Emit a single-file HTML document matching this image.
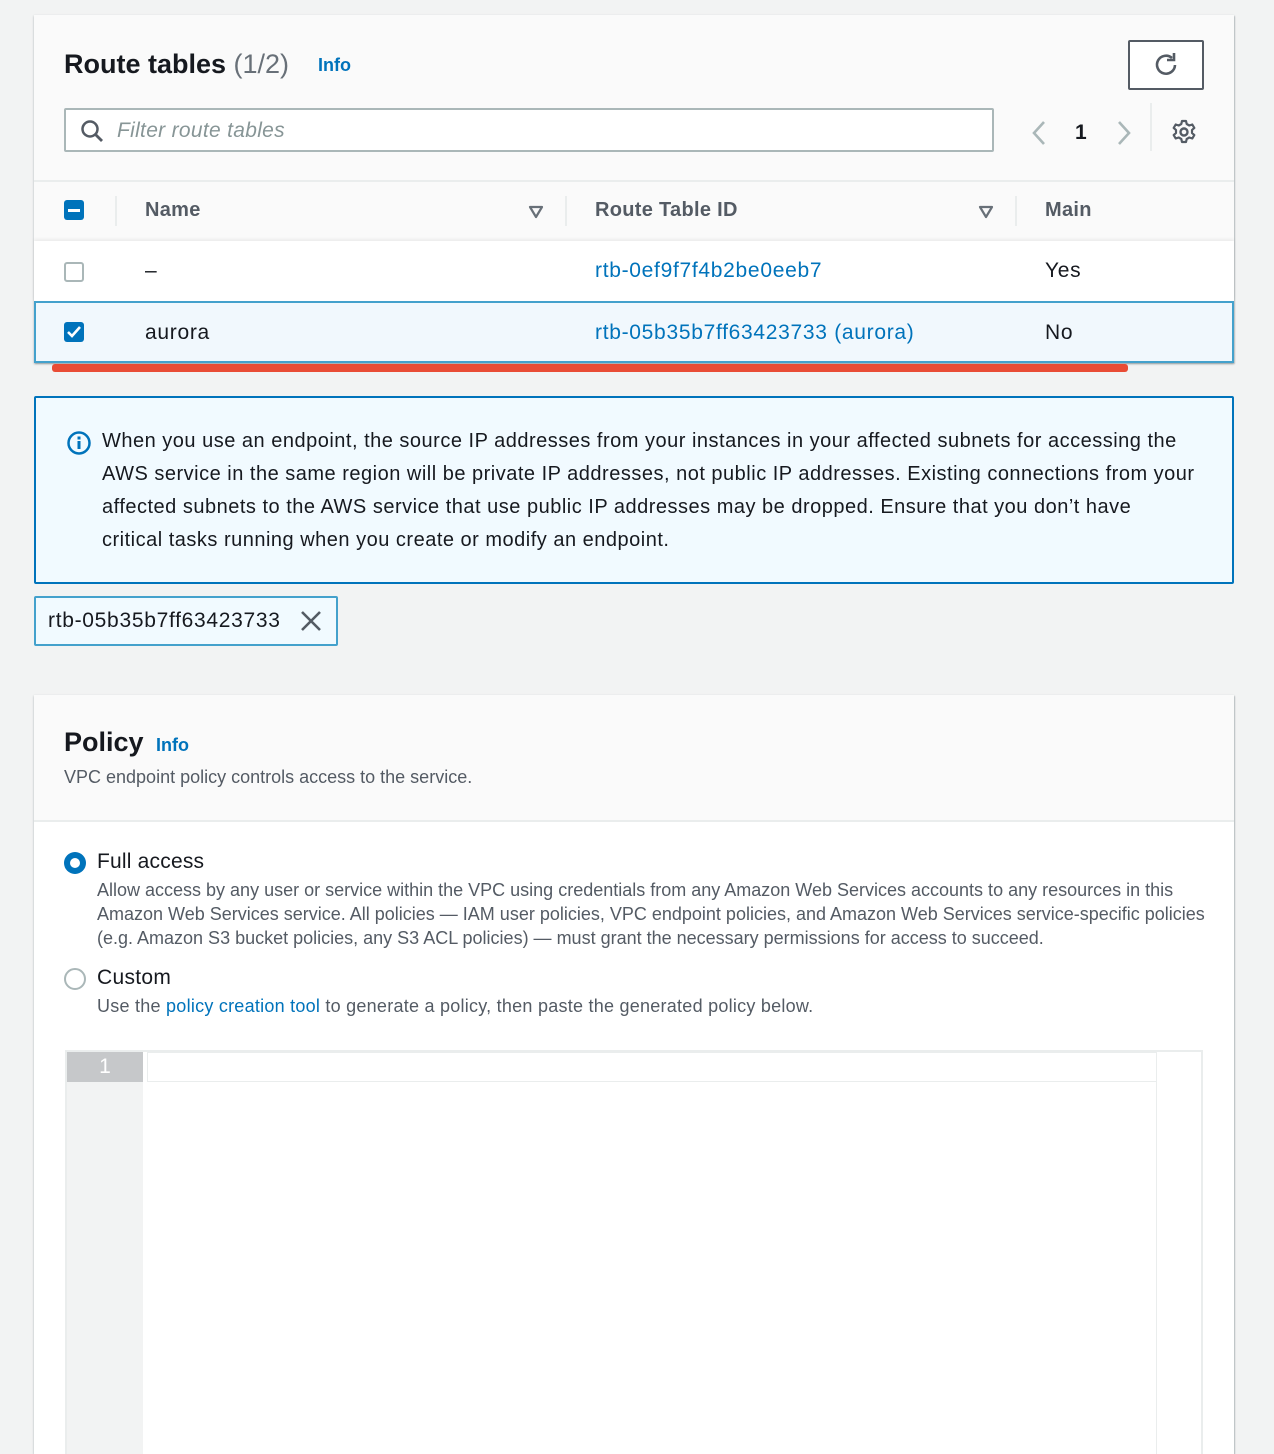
<!DOCTYPE html>
<html style="overflow:hidden;height:1454px"><head><meta charset="utf-8"><style>
body{margin:0;width:1274px;height:1454px;background:#f2f3f3;font-family:"Liberation Sans",sans-serif;color:#16191f;position:relative;overflow:hidden}
.abs{position:absolute}
.panel{position:absolute;left:34px;width:1200px;background:#fff;box-shadow:0 1px 2px rgba(0,28,36,.3),1px 1px 1px rgba(0,28,36,.15)}
.link{color:#0073bb}
.cb{position:absolute;width:20px;height:20px;border-radius:3px;box-sizing:border-box}
.th{position:absolute;top:199px;font-weight:bold;font-size:20px;color:#545b64;letter-spacing:.3px}
.sep{position:absolute;top:196px;width:2px;height:30px;background:#eaeded}
.td{position:absolute;font-size:21px;letter-spacing:.7px}
</style></head><body>

<div class="panel" style="top:15px;height:348px;background:#fafafa">
 <div class="abs" style="left:30px;top:34px;font-size:27px;font-weight:bold">Route tables <span style="font-weight:normal;color:#687078">(1/2)</span></div>
 <div class="abs link" style="left:284px;top:40px;font-size:18px;font-weight:bold">Info</div>
 <div class="abs" style="left:1094px;top:25px;width:72px;height:46px;border:2px solid #545b64;border-radius:2px;background:#fff">
  <svg width="72" height="46" viewBox="0 0 72 46"><path d="M45 23a9 9 0 1 1-3-7" fill="none" stroke="#545b64" stroke-width="2.6"/><path d="M44 11v7h-7" fill="none" stroke="#545b64" stroke-width="2.6"/></svg>
 </div>
 <div class="abs" style="left:30px;top:93px;width:926px;height:40px;border:2px solid #aab7b8;border-radius:2px;background:#fff">
  <svg class="abs" style="left:14px;top:9px" width="24" height="24"><circle cx="10" cy="10" r="7.5" fill="none" stroke="#545b64" stroke-width="2.5"/><path d="M15.5 15.5L22 22" stroke="#545b64" stroke-width="2.8"/></svg>
  <div class="abs" style="left:51px;top:9px;font-size:21px;font-style:italic;color:#879596;letter-spacing:.3px">Filter route tables</div>
 </div>
 <svg class="abs" style="left:996px;top:104px" width="20" height="28"><path d="M14 3L4 14l10 11" fill="none" stroke="#aab7b8" stroke-width="2.6"/></svg>
 <div class="abs" style="left:1041px;top:106px;font-size:21px;font-weight:bold">1</div>
 <svg class="abs" style="left:1080px;top:104px" width="20" height="28"><path d="M5 3l10 11L5 25" fill="none" stroke="#aab7b8" stroke-width="2.6"/></svg>
 <div class="abs" style="left:1116px;top:88px;width:2px;height:48px;background:#eaeded"></div>
 <svg class="abs" style="left:1137px;top:104px" width="26" height="26" viewBox="0 0 26 26"><circle cx="13" cy="13" r="3.5" fill="none" stroke="#545b64" stroke-width="2.4"/><path d="M11 2h4l.7 3 2.6 1.5 3-1 2 3.4-2.3 2.1v3l2.3 2.1-2 3.4-3-1-2.6 1.5-.7 3h-4l-.7-3-2.6-1.5-3 1-2-3.4 2.3-2.1v-3L2.7 8.9l2-3.4 3 1L10.3 5z" fill="none" stroke="#545b64" stroke-width="2.2" stroke-linejoin="round"/></svg>
 <div class="abs" style="left:0;top:165px;width:1200px;height:2px;background:#eaeded"></div>
</div>
<div class="cb" style="left:64px;top:200px;background:#0073bb;border:none"><div class="abs" style="left:4px;top:9px;width:12px;height:3px;background:#fff"></div></div>
<div class="sep" style="left:115px"></div>
<div class="th" style="left:145px">Name</div>
<svg class="abs" style="left:528px;top:205px" width="16" height="14"><path d="M2 2h12L8 12z" fill="none" stroke="#687078" stroke-width="2.2" stroke-linejoin="round"/></svg>
<div class="sep" style="left:565px"></div>
<div class="th" style="left:595px">Route Table ID</div>
<svg class="abs" style="left:978px;top:205px" width="16" height="14"><path d="M2 2h12L8 12z" fill="none" stroke="#687078" stroke-width="2.2" stroke-linejoin="round"/></svg>
<div class="sep" style="left:1015px"></div>
<div class="th" style="left:1045px">Main</div>
<div class="abs" style="left:34px;top:241px;width:1200px;height:60px;background:#fff;box-shadow:0 -2px 3px rgba(0,0,0,.06)"></div>
<div class="cb" style="left:64px;top:262px;border:2px solid #aab7b8;background:#fff"></div>
<div class="td" style="left:145px;top:259px">–</div>
<div class="td link" style="left:595px;top:259px">rtb-0ef9f7f4b2be0eeb7</div>
<div class="td" style="left:1045px;top:259px">Yes</div>
<div class="abs" style="left:34px;top:301px;width:1196px;height:58px;background:#f1f8fd;border:2px solid #44a1cc"></div>
<div class="cb" style="left:64px;top:322px;background:#0073bb"><svg width="20" height="20"><path d="M4 10l4 4 8-9" fill="none" stroke="#fff" stroke-width="2.6"/></svg></div>
<div class="td" style="left:145px;top:321px">aurora</div>
<div class="td link" style="left:595px;top:321px">rtb-05b35b7ff63423733 (aurora)</div>
<div class="td" style="left:1045px;top:321px">No</div>
<div class="abs" style="left:52px;top:364px;width:1076px;height:8px;background:#e8422a;border-radius:3px;opacity:.95"></div>

<div class="abs" style="left:34px;top:396px;width:1196px;height:184px;background:#f1faff;border:2px solid #0073bb;border-radius:2px">
 <svg class="abs" style="left:30px;top:32px" width="26" height="26"><circle cx="13" cy="13" r="10.5" fill="none" stroke="#0073bb" stroke-width="2.5"/><rect x="11.5" y="11" width="3" height="8" fill="#0073bb"/><rect x="11.5" y="6.5" width="3" height="3" fill="#0073bb"/></svg>
 <div class="abs" style="left:66px;top:27px;white-space:nowrap;font-size:20px;line-height:33px;letter-spacing:.5px">When you use an endpoint, the source IP addresses from your instances in your affected subnets for accessing the<br>AWS service in the same region will be private IP addresses, not public IP addresses. Existing connections from your<br>affected subnets to the AWS service that use public IP addresses may be dropped. Ensure that you don’t have<br>critical tasks running when you create or modify an endpoint.</div>
</div>
<div class="abs" style="left:34px;top:596px;width:300px;height:46px;background:#f1faff;border:2px solid #44a1cc;border-radius:2px">
 <div class="abs" style="left:12px;top:11px;font-size:21px;letter-spacing:.7px">rtb-05b35b7ff63423733</div>
 <svg class="abs" style="left:264px;top:12px" width="22" height="22"><path d="M2 2l18 18M20 2L2 20" stroke="#545b64" stroke-width="2.6"/></svg>
</div>

<div class="panel" style="top:695px;height:759px">
 <div class="abs" style="left:0;top:0;width:1200px;height:125px;background:#fafafa;border-bottom:2px solid #eaeded"></div>
 <div class="abs" style="left:30px;top:32px;font-size:27px;font-weight:bold">Policy</div>
 <div class="abs link" style="left:122px;top:40px;font-size:18px;font-weight:bold">Info</div>
 <div class="abs" style="left:30px;top:72px;font-size:18px;color:#545b64">VPC endpoint policy controls access to the service.</div>
 <div class="abs" style="left:30px;top:157px;width:22px;height:22px;border-radius:50%;background:#0073bb"><div class="abs" style="left:6px;top:6px;width:10px;height:10px;border-radius:50%;background:#fff"></div></div>
 <div class="abs" style="left:63px;top:155px;font-size:21px;letter-spacing:.2px">Full access</div>
 <div class="abs" style="left:63px;top:183px;width:1110px;font-size:18px;line-height:24px;color:#545b64">Allow access by any user or service within the VPC using credentials from any Amazon Web Services accounts to any resources in this Amazon Web Services service. All policies — IAM user policies, VPC endpoint policies, and Amazon Web Services service-specific policies (e.g. Amazon S3 bucket policies, any S3 ACL policies) — must grant the necessary permissions for access to succeed.</div>
 <div class="abs" style="left:30px;top:273px;width:18px;height:18px;border-radius:50%;border:2px solid #aab7b8"></div>
 <div class="abs" style="left:63px;top:271px;font-size:21px;letter-spacing:.3px">Custom</div>
 <div class="abs" style="left:63px;top:301px;font-size:18px;color:#545b64;letter-spacing:.25px">Use the <span class="link">policy creation tool</span> to generate a policy, then paste the generated policy below.</div>
 <div class="abs" style="left:31px;top:355px;width:1134px;height:460px;border:2px solid #eaeded;background:#fff">
  <div class="abs" style="left:0;top:0;width:76px;height:460px;background:#f2f3f3"></div>
  <div class="abs" style="left:0;top:0;width:76px;height:30px;background:#c6c8ca;color:#fff;font-size:21px;text-align:center;line-height:30px">1</div>
  <div class="abs" style="left:80px;top:0;width:1008px;height:28px;border:1px solid #eaeded"></div>
  <div class="abs" style="left:1089px;top:0;width:1px;height:460px;background:#eaeded"></div>
 </div>
</div>
</body></html>
